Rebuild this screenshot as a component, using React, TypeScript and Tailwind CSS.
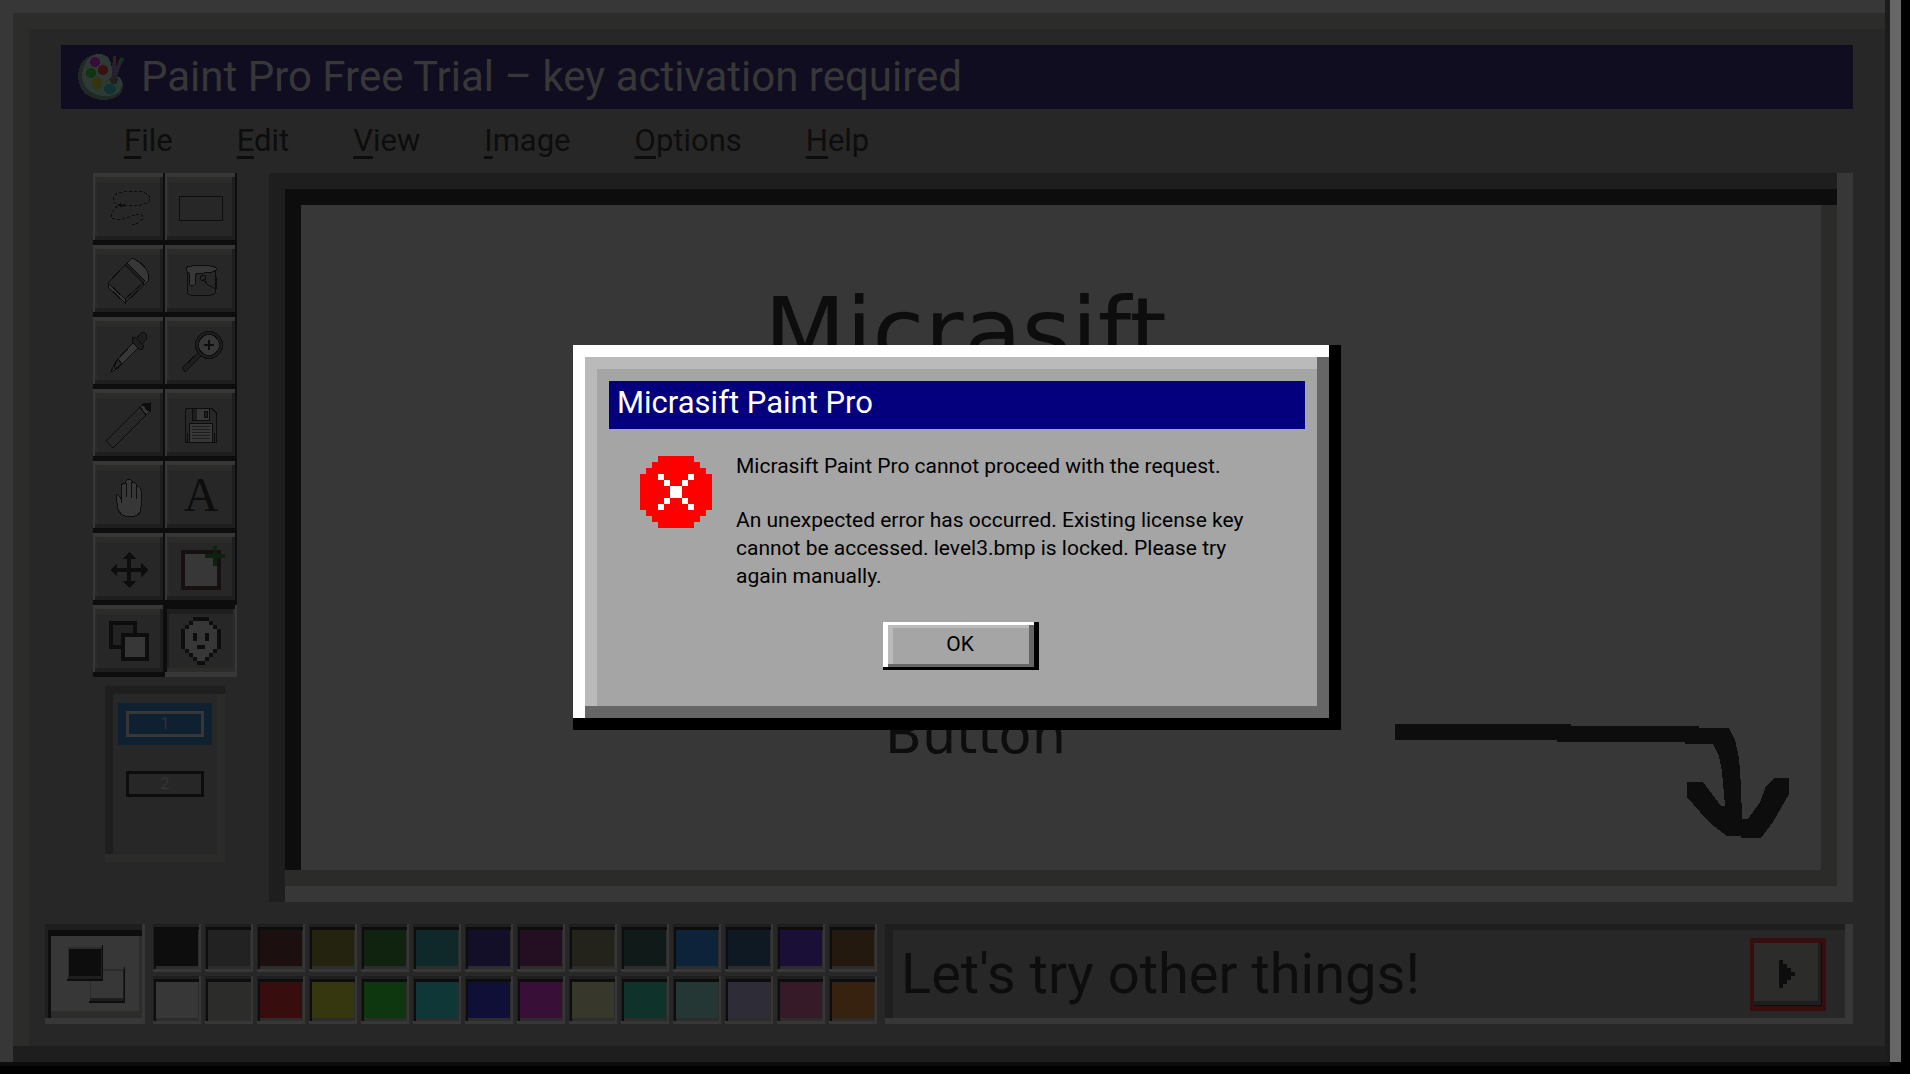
import clsx from "clsx";
import type { ReactNode } from "react";

const raised = "shadow-[inset_-2px_-5px_#0d0d0d,inset_2px_4px_#373737,inset_-5px_-9px_#1e1e1e,inset_4px_9px_#2c2c2a]"
const pressed = "shadow-[inset_-2px_-5px_#373737,inset_2px_4px_#0d0d0d,inset_-4px_-9px_#2c2c2a,inset_4px_9px_#1e1e1e]"

function Icon({children}: {children: ReactNode}){
  return(
    <svg className="block size-[72px]" viewBox="0 0 72 72" fill="none" stroke="#0d0d0d" strokeWidth="1" shapeRendering="crispEdges" aria-hidden="true">
      {children}
    </svg>
  )
}

const tools: {name: string, icon: ReactNode}[] = [
  {
    name: 'Free select',
    icon: (
      <Icon>
        <path strokeDasharray="3 2" d="M28 32C22 31 20 29 20 26C20 21 28 18 39 18C50 18 57 21 57 26C57 30 48 33 39 33C34 33 31 32 28 31C22 34 18 40 18 43C19 47 24 47 30 46C37 44 42 41 48 41C52 43 50 50 39 52"/>
        <path d="M25 32h6M27 30l4 4M27 34l5-3"/>
      </Icon>
    )
  },
  {
    name: 'Rectangle select',
    icon: <Icon><rect x="14.5" y="23.5" width="43" height="24"/></Icon>
  },
  {
    name: 'Eraser',
    icon: (
      <Icon>
        <path fill="#373737" d="M32 20L38 14Q40 13 43 15Q52 20 55 28L56 35L50 41L49 37Z"/>
        <path fill="#272727" d="M32 20L50 38L32 54L15 38Z"/>
        <path fill="#373737" d="M15 38L32 54V58L15 42Z"/>
        <path fill="#272727" d="M32 54L50 38V41L32 58Z"/>
        <path fill="#1e1e1e" d="M32 20L34 18L52 36L50 38Z"/>
      </Icon>
    )
  },
  {
    name: 'Fill',
    icon: (
      <Icon>
        <path fill="#272727" d="M22 25V48Q24 51 36 51Q48 51 50 48V25"/>
        <path fill="#373737" d="M21 23Q23 20.5 36 20.5Q49 20.5 51 23V25Q48 28 39 28H34Q31 28 30 31V39Q28 42 25 40L24 36L25 31L24 28L21 25Z"/>
        <circle cx="38" cy="33" r="2.5"/>
        <path d="M38 34L43 40L51 44L52 39L51 32"/>
      </Icon>
    )
  },
  {
    name: 'Pick colour',
    icon: (
      <Icon>
        <path fill="#373737" d="M40 26L45 31L27 49L22 53L18 55L20 50L23 44Z"/>
        <path d="M25 42L29 47L22 52L21 50Z" fill="#272727"/>
        <path fill="#1e1e1e" d="M43 22L47 17Q50 14 53 17Q55 20 53 23L48 28Z"/>
        <path fill="#1e1e1e" d="M39 21L42 20L51 29L49 33L46 32L39 25Z"/>
      </Icon>
    )
  },
  {
    name: 'Zoom',
    icon: (
      <Icon>
        <path fill="#1e1e1e" d="M34 35L17 51L20 55L37 38Z"/>
        <circle cx="44" cy="28" r="13.5" fill="#1e1e1e"/>
        <circle cx="44" cy="28" r="10.5" fill="#373737"/>
        <path strokeWidth="2" d="M39 28h10M44 23v10"/>
      </Icon>
    )
  },
  {
    name: 'Pencil',
    icon: (
      <Icon>
        <path fill="#272727" d="M47 18L53 26L20 59L13 52Z"/>
        <path fill="#373737" d="M47 18L51 15L57 22L53 26Z"/>
        <path fill="#0d0d0d" d="M50 15L57 14V22L54 21Z"/>
      </Icon>
    )
  },
  {
    name: 'Save',
    icon: (
      <Icon>
        <path fill="#272727" d="M22 19.5H47L51.5 24V53.5H20.5V21Z"/>
        <rect x="27.5" y="19.5" width="17" height="12" fill="#373737"/>
        <rect x="28" y="20" width="4" height="11" fill="#1e1e1e" stroke="none"/>
        <rect x="39.5" y="22.5" width="3" height="6" rx="1" fill="#1e1e1e"/>
        <rect x="24.5" y="34.5" width="23" height="19" fill="#373737"/>
        <path stroke="#1e1e1e" d="M27 37.5h18M27 40.5h18M27 43.5h18M27 46.5h18M27 49.5h18"/>
        <path d="M22.5 44v9M49.5 44v9"/>
      </Icon>
    )
  },
  {
    name: 'Pan',
    icon: (
      <Icon>
        <path fill="#373737" d="M25 48L23 36V34Q26 33 28 38V25Q29 22 32 23L33 20Q36 16 39 20L39 22Q43 20 44 26Q47 25 48 29V46Q48 56 36 56Q27 55 25 48Z"/>
        <path d="M33.5 22v14M38.5 21v16M43.5 25v13M28.5 36v6"/>
      </Icon>
    )
  },
  {
    name: 'Text',
    icon: <span className="flex h-[72px] items-center justify-center pb-1 font-['Liberation_Serif',serif] text-5xl leading-none text-[#0d0d0d]">A</span>
  },
  {
    name: 'Move',
    icon: (
      <Icon>
        <path fill="#0d0d0d" stroke="none" d="M36 19L43 26H38V35H48V30L55 37L48 44V39H38V48H43L36 55L29 48H34V39H24V44L17 37L24 30V35H34V26H29Z"/>
      </Icon>
    )
  },
  {
    name: 'New canvas',
    icon: (
      <Icon>
        <rect x="18" y="19" width="36" height="36" fill="#373737" stroke="#180f10" strokeWidth="4"/>
        <path stroke="#0f210f" strokeWidth="4" d="M40 23h20M50 13v20"/>
      </Icon>
    )
  },
  {
    name: 'Copy layer',
    icon: (
      <Icon>
        <rect x="18" y="18" width="24" height="24" fill="#222" strokeWidth="4"/>
        <rect x="30" y="30" width="24" height="24" fill="#373737" strokeWidth="4"/>
      </Icon>
    )
  },
  {
    name: 'Face',
    icon: (
      <Icon>
        <path fill="#373737" stroke="none" d="M28 14H44V18H48V22H52V46H48V50H44V54H40V58H32V54H28V50H24V46H20V22H24V18H28Z"/>
        <path fill="#0d0d0d" stroke="none" d="M28 12h16v4h-16zM24 16h4v4h-4zM44 16h4v4h-4zM20 20h4v4h-4zM48 20h4v4h-4zM16 24h4v20h-4zM52 24h4v20h-4zM20 44h4v4h-4zM48 44h4v4h-4zM24 48h4v4h-4zM44 48h4v4h-4zM28 52h4v4h-4zM40 52h4v4h-4zM32 56h8v4h-8zM28 28h4v8h-4zM40 28h4v8h-4zM32 40h8v4h-8z"/>
      </Icon>
    )
  },
]

const colors = [
  'bg-[#0d0d0d]', 'bg-[#222222]', 'bg-[#1c0f0f]', 'bg-[#24230f]', 'bg-[#10230f]', 'bg-[#0f292b]', 'bg-[#130f29]',
  'bg-[#230f21]', 'bg-[#23231b]', 'bg-[#0f1a19]', 'bg-[#0d2339]', 'bg-[#0e1924]', 'bg-[#1a0f37]', 'bg-[#24190f]',
  'bg-[#373737]', 'bg-[#2c2c2a]', 'bg-[#370d0d]', 'bg-[#37370f]', 'bg-[#0f370f]', 'bg-[#0f3737]', 'bg-[#0f0f37]',
  'bg-[#370f37]', 'bg-[#37372b]', 'bg-[#0f332a]', 'bg-[#243735]', 'bg-[#2e2d37]', 'bg-[#371a28]', 'bg-[#37220f]',
]

const menu = ['File', 'Edit', 'View', 'Image', 'Options', 'Help']

function PaletteLogo(){
  return(
    <svg className="size-12" viewBox="0 0 48 48" shapeRendering="crispEdges" aria-hidden="true">
      <path fill="#202926" d="M20 1Q30 0 34 10Q35 19 38 23Q46 23 46 33Q45 47 25 47Q3 45 1 24Q2 3 20 1Z"/>
      <path fill="#2e3936" d="M21 1Q31 1 34 10Q35 19 38 23Q46 24 45 33Q42 43 28 43Q8 42 5 24Q6 4 21 1Z"/>
      <ellipse cx="18" cy="9" rx="5" ry="5" fill="#360d36"/>
      <circle cx="26" cy="17" r="5" fill="#3a1111"/>
      <circle cx="14" cy="20" r="5" fill="#0f340f"/>
      <ellipse cx="20" cy="30" rx="5" ry="6" fill="#35340f"/>
      <ellipse cx="33" cy="36" rx="6" ry="5" fill="#0f3333"/>
      <path stroke="#29202f" strokeWidth="4" d="M37 10V27M43 9L38 23"/>
      <path stroke="#37220f" strokeWidth="3" d="M37 3v7"/>
      <path stroke="#0f340f" strokeWidth="4" d="M46 5l-3 4"/>
      <path fill="#202020" d="M32 26l5-4 4 4-1 5h-5z"/>
    </svg>
  )
}

function Toolbox(){
  return(
    <div className="flex w-36 shrink-0 flex-col items-center">
      <div className="grid grid-cols-2">
        {
          tools.map((v,i)=>(
            <button key={v.name} type="button" aria-label={v.name} className={clsx('size-[72px]', i === tools.length - 1 ? pressed : raised)}>
              {v.icon}
            </button>
          ))
        }
      </div>
      <div className="mt-[9px] flex h-44 w-[120px] flex-col items-center pt-[17px] shadow-[inset_0_-8px_#2b2b29,inset_8px_8px_#1e1e1e,inset_-8px_0_#2b2b29]">
        <button type="button" className="bg-[#0f2131] p-2">
          <span className="flex h-[26px] w-[78px] items-center justify-center border-3 border-[#373737] text-base leading-none text-[#2c3338]">1</span>
        </button>
        <button type="button" className="mt-[18px] p-2">
          <span className="flex h-[26px] w-[78px] items-center justify-center border-3 border-[#0d0d0d] text-base leading-none text-[#343434]">2</span>
        </button>
      </div>
    </div>
  )
}

function Canvas(){
  return(
    <div className="relative flex-1 overflow-hidden bg-[#373737] text-[#0d0d0d] shadow-[inset_-16px_0_#373737,inset_16px_0_#1e1e1e,inset_0_-16px_#373737,inset_0_16px_#1e1e1e,inset_0_-32px_#2b2b29,inset_32px_32px_#0d0d0d,inset_-32px_0_#2b2b29]">
      <p className="absolute top-[112px] left-[495px] font-['DejaVu_Sans',sans-serif] text-[95px] leading-none">Micrasift</p>
      <p className="absolute top-[535px] left-[616px] font-['DejaVu_Sans',sans-serif] text-[54px] leading-none">Button</p>
      <svg className="absolute right-16 bottom-16 h-[114px] w-[394px]" viewBox="0 0 394 114" shapeRendering="crispEdges" aria-hidden="true">
        <path fill="#0d0d0d" d="M0 0H176V2H304V4H334L340 16L344 34L346 62L347 95H353L365 78L371 62L379 54H394V70L386 84L378 98L366 114H346V112H332L316 100L305 88L292 73V58H308L317 70L326 82H330L327 48L324 32L318 20H290V18H162V16H0Z"/>
      </svg>
    </div>
  )
}

function BottomBar(){
  return(
    <div className="mt-[22px] flex gap-2">
      <div className="relative size-[100px] shrink-0 bg-[#373737] shadow-[inset_-3px_-6px_#373737,inset_3px_6px_#1e1e1e,inset_6px_12px_#0d0d0d,inset_-6px_-13px_#2c2c2a]">
        <div className="absolute top-[43px] left-11 size-9 bg-[#373737] shadow-[inset_-1px_-2px_#0d0d0d,inset_1px_2px_#373737,inset_-2px_-5px_#1e1e1e,inset_2px_4px_#2c2c2a]"/>
        <div className="absolute top-[21px] left-[22px] size-9 bg-[#0d0d0d] shadow-[inset_-1px_-2px_#0d0d0d,inset_1px_2px_#373737,inset_-2px_-5px_#1e1e1e,inset_2px_4px_#2c2c2a]"/>
      </div>
      <div className="grid shrink-0 grid-cols-[repeat(14,48px)] gap-1">
        {
          colors.map((v,i)=>(
            <button key={v} type="button" aria-label={`Colour ${i + 1}`} className={clsx('size-12 shadow-[inset_-2px_-3px_#373737,inset_1px_3px_#1e1e1e,inset_3px_6px_#0d0d0d,inset_-3px_-6px_#2c2c2a]', v)}/>
          ))
        }
      </div>
      <div className="flex flex-1 items-center justify-between pr-[27px] pl-4 shadow-[inset_-8px_-6px_#373737,inset_8px_6px_#1e1e1e]">
        <p className="text-[56px] leading-none whitespace-nowrap text-[#0d0d0d]">Let's try other things!</p>
        <button type="button" aria-label="Next" className="flex h-[73px] w-[76px] items-center justify-center border-4 border-y-5 border-[#370d0d] bg-[#2c2c2a] pr-0.5 shadow-[inset_-1px_-1px_#0d0d0d,inset_-4px_-5px_#1e1e1e]">
          <svg className="h-7 w-4" viewBox="0 0 16 28" shapeRendering="crispEdges" aria-hidden="true">
            <path fill="#0d0d0d" d="M0 0H4V4H8V8H12V12H16V16H12V20H8V24H4V28H0Z"/>
          </svg>
        </button>
      </div>
    </div>
  )
}

function ErrorDialog(){
  return(
    <div role="alertdialog" aria-labelledby="error-title" className="w-[768px] bg-[#a5a5a5] p-9 pb-[60px] text-black shadow-[inset_-12px_-12px_#000,inset_12px_12px_#fff,inset_-24px_-24px_#666,inset_24px_24px_#bababa]">
      <h2 id="error-title" className="h-12 bg-[#04007d] pl-2 text-[31px] leading-11 text-white">Micrasift Paint Pro</h2>
      <div className="mt-[23px] flex pl-[31px] text-[21px] leading-7">
        <svg className="mt-1 size-[72px] shrink-0" viewBox="0 0 12 12" shapeRendering="crispEdges" aria-hidden="true">
          <path fill="#f00" d="M3 0H9V1H10V2H11V3H12V9H11V10H10V11H9V12H3V11H2V10H1V9H0V3H1V2H2V1H3Z"/>
          <path fill="#fff" d="M3 3h1v1h-1zM8 3h1v1h-1zM4 4h1v1h-1zM7 4h1v1h-1zM5 5h2v2h-2zM4 7h1v1h-1zM7 7h1v1h-1zM3 8h1v1h-1zM8 8h1v1h-1z"/>
        </svg>
        <div className="ml-6 whitespace-nowrap">
          <p>Micrasift Paint Pro cannot proceed with the request.</p>
          <p className="mt-[26px]">An unexpected error has occurred. Existing license key<br/>cannot be accessed. level3.bmp is locked. Please try<br/>again manually.</p>
        </div>
      </div>
      <div className="mt-8 flex justify-center pl-2">
        <button type="button" className="h-12 w-[156px] pr-0.5 pb-0.5 text-[21px] leading-none shadow-[inset_-5px_-3px_#000,inset_5px_3px_#fff,inset_-10px_-6px_#666,inset_10px_6px_#bababa]">OK</button>
      </div>
    </div>
  )
}

export default function App(){
  return(
    <div className="relative flex min-h-screen bg-black pb-2 font-['Roboto','Liberation_Sans',sans-serif]">
      <div className="flex flex-1 flex-col bg-[#272727] pt-[45px] pr-[37px] pb-[42px] pl-[45px] shadow-[inset_0_-4px_#0d0d0d,inset_-5px_0_#1c1c1c,inset_13px_13px_#373737,inset_0_-20px_#1e1e1e,inset_29px_29px_#2c2c2a]">
        <header className="ml-4 flex h-16 items-center gap-4 bg-[#100d21] pl-4">
          <PaletteLogo />
          <h1 className="text-[42px] leading-none whitespace-nowrap text-[#373737]">Paint Pro Free Trial – key activation required</h1>
        </header>
        <nav className="ml-4 flex h-16 items-center gap-16 pb-0.5 pl-[63px] text-[31px] leading-none text-[#0d0d0d]">
          {
            menu.map((v)=>(
              <button key={v} type="button">
                <span className="underline decoration-3 underline-offset-[5px]">{v[0]}</span>{v.slice(1)}
              </button>
            ))
          }
        </nav>
        <div className="flex flex-1 gap-8 pl-12">
          <Toolbox />
          <Canvas />
        </div>
        <BottomBar />
      </div>
      <div className="mr-[9px] mb-1 w-[11px] bg-[#666]"/>
      <div className="absolute inset-0 flex items-center justify-center pl-1">
        <ErrorDialog />
      </div>
    </div>
  )
}
